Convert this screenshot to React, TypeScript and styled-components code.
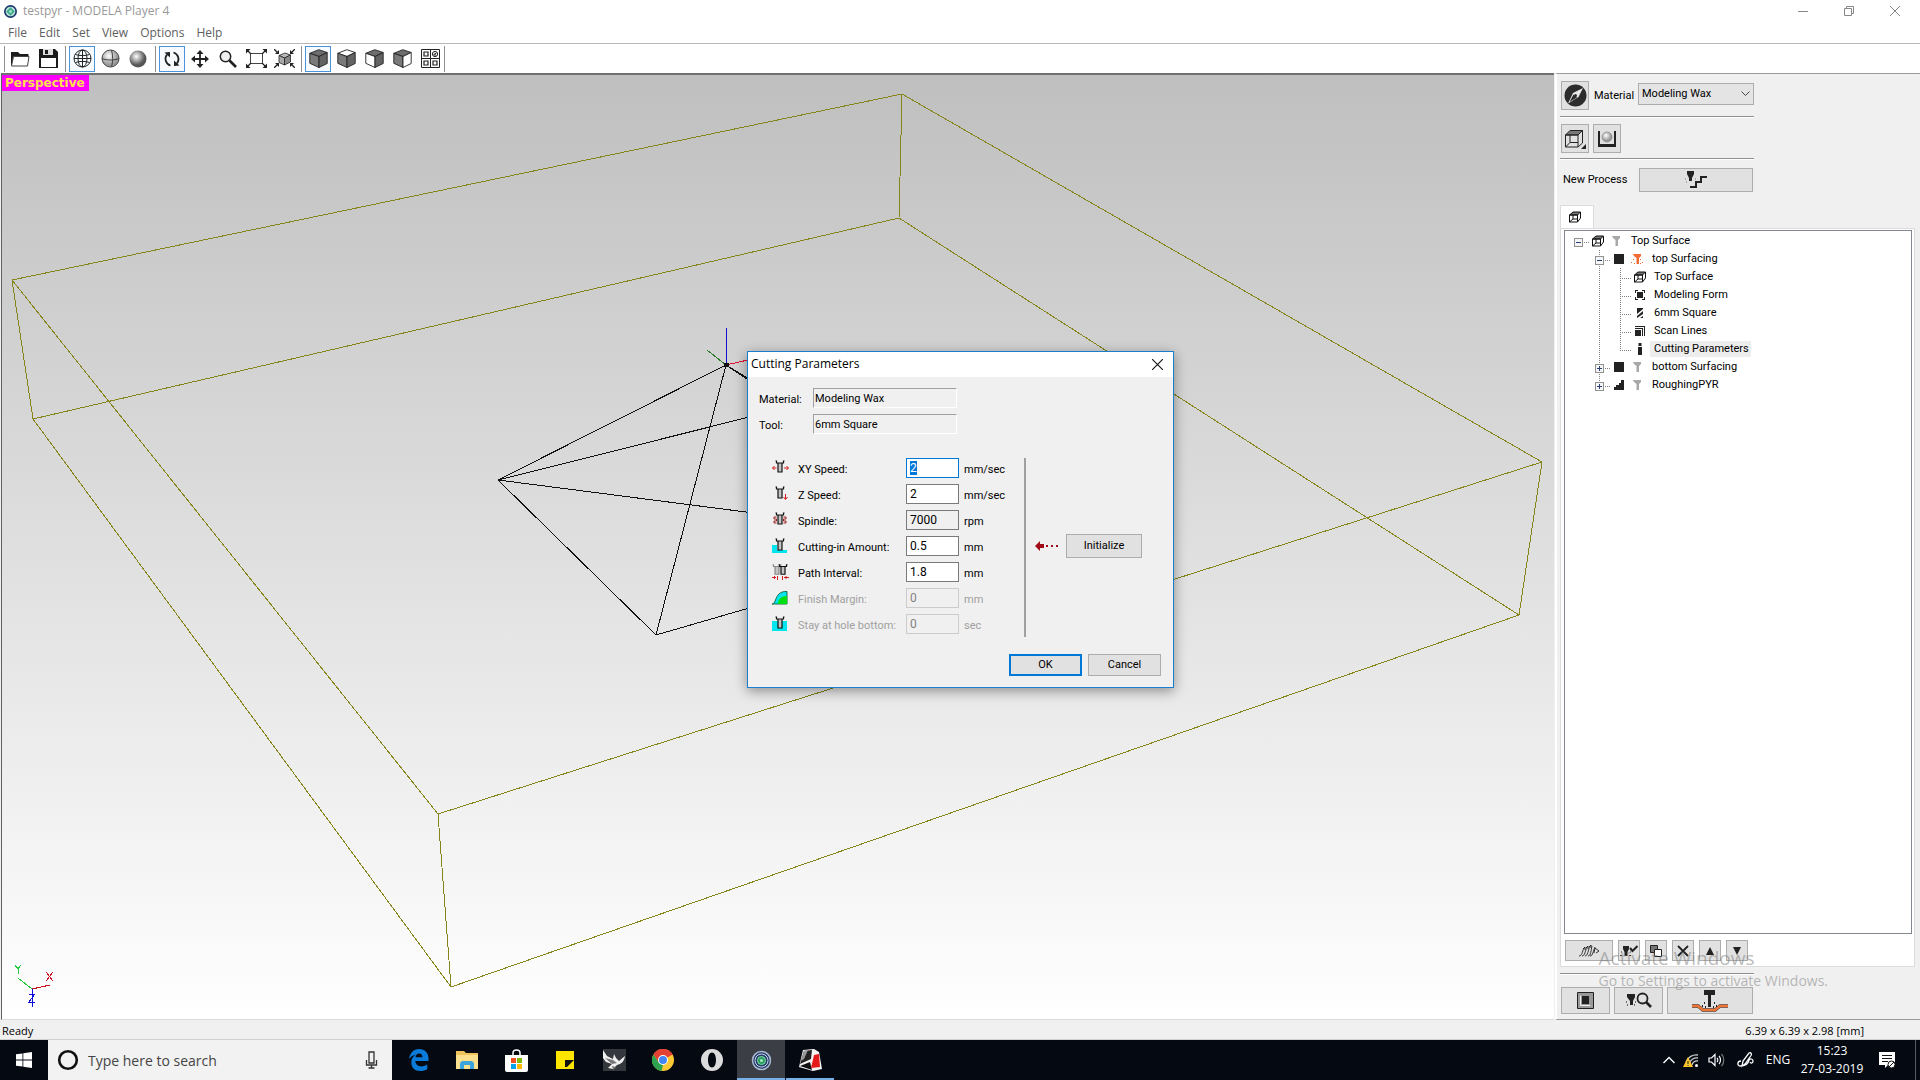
import React, { useEffect, useRef } from "react";
import styled, { createGlobalStyle, css } from "styled-components";

const ui = `"Open Sans", "Noto Sans", sans-serif`;
const classic = `Roboto, "Liberation Sans", sans-serif`;

const GlobalStyle = createGlobalStyle`
  *, *::before, *::after { box-sizing: border-box; }
  body { margin: 0; background: #f0f0f0; color: #000; overflow: hidden; }
  button, input, select { font: inherit; color: inherit; margin: 0; border-radius: 0; }
  button { padding: 0; border: 0; background: none; }
  svg { display: block; flex: none; }
  ul { list-style: none; margin: 0; padding: 0; }
`;

/* ---------- frame ---------- */

const Desktop = styled.div`
  position: relative;
  display: flex;
  flex-direction: column;
  height: 100vh;
  font: 12px/16px ${ui};
`;

const TitleBar = styled.header`
  display: flex;
  align-items: center;
  height: 22px;
  padding: 0 2px 0 4px;
  background: #fff;
  color: #999;
`;

const AppTitle = styled.h1`
  flex: 1;
  margin: 0;
  padding-left: 6px;
  font: 12px/16px ${ui};
`;

const WindowButton = styled.button`
  display: grid;
  place-items: center;
  width: 46px;
  height: 22px;
`;

const MenuBar = styled.nav`
  display: flex;
  height: 21px;
  padding-left: 2px;
  background: #fff;
  color: #606060;
`;

const MenuButton = styled.button`
  padding: 0 6px;
`;

const Toolbar = styled.div`
  display: flex;
  align-items: center;
  height: 30px;
  padding-left: 4px;
  background: #fff;
  border-top: 1px solid #b8b8b8;
`;

const ToolGroup = styled.div`
  display: flex;
  align-items: center;
  height: 26px;
  padding: 0 3px 0 1px;
  border-left: 1px solid #909090;

  & + & {
    padding-left: 2px;
  }

  &:last-child {
    padding-right: 0;
    border-right: 1px solid #909090;
  }
`;

const ToolButton = styled.button<{ $on?: boolean }>`
  display: grid;
  place-items: center;
  width: 26px;
  height: 26px;
  margin: 0 1px;
  border: 1px solid ${(p) => (p.$on ? "#4a94dc" : "transparent")};
  background: ${(p) => (p.$on ? "#f7fbff" : "none")};
`;

const Main = styled.main`
  display: flex;
  flex: 1;
  min-height: 0;
  padding-left: 1px;
`;

const Viewport = styled.section`
  position: relative;
  flex: 1;
  min-width: 0;
  border-top: 2px solid #707070;
  border-left: 1px solid #606060;
  border-bottom: 1px solid #dcdcdc;
  background: linear-gradient(#bfbfbf, #fff);
`;

const Scene = styled.svg`
  width: 100%;
  height: 100%;
`;

const ViewTag = styled.span`
  position: absolute;
  top: 0;
  left: 0;
  padding: 0 4px 0 3px;
  background: #f0f;
  color: #ffe24a;
  font: bold 12px/16px "DejaVu Sans", sans-serif;
`;

const StatusBar = styled.footer`
  display: flex;
  justify-content: space-between;
  align-items: center;
  height: 20px;
  padding: 3px 56px 0 2px;
  background: #f0f0f0;
  border-bottom: 1px solid #d0d0d0;
  font-size: 11px;
`;

/* ---------- side panel ---------- */

const SidePanel = styled.aside`
  display: flex;
  flex-direction: column;
  width: 365px;
  padding: 7px 5px 5px 3px;
  border-top: 1px solid #9a9a9a;
  border-left: 2px solid #fff;
  border-bottom: 1px solid #9a9a9a;
  margin-left: 1px;
  background: #f0f0f0;
  font: 11px/16px ${classic};
`;

const PanelRow = styled.div<{ $gap?: number }>`
  display: flex;
  align-items: center;
  gap: ${(p) => p.$gap ?? 4}px;
  width: 194px;
  padding-left: 1px;
`;

const PanelRule = styled.hr<{ $above?: number; $below?: number }>`
  width: 194px;
  margin: ${(p) => p.$above ?? 6}px 0 ${(p) => p.$below ?? 6}px;
  border: 0;
  border-top: 1px solid #909090;
  border-bottom: 1px solid #fff;
`;

const FlatButton = styled.button<{ $w: number; $h: number }>`
  display: grid;
  place-items: center;
  width: ${(p) => p.$w}px;
  height: ${(p) => p.$h}px;
  border: 1px solid #adadad;
  background: #e1e1e1;
`;

const SelectWrap = styled.span`
  position: relative;
  display: block;
  flex: 1;
  padding-bottom: 3px;

  svg {
    position: absolute;
    right: 4px;
    top: 8px;
    pointer-events: none;
  }
`;

const MaterialSelect = styled.select`
  display: block;
  width: 100%;
  height: 22px;
  padding: 0 3px;
  border: 1px solid #adadad;
  background: #e4e4e4;
  appearance: none;
`;

const SideLabel = styled.label`
  width: 39px;
`;

const ProcessRow = styled.div`
  display: flex;
  align-items: center;
  justify-content: space-between;
  width: 193px;
  padding: 2px 0 13px 3px;
`;

const Tab = styled.button`
  display: grid;
  place-items: center;
  width: 34px;
  height: 23px;
  padding-right: 4px;
  border: 1px solid #dcdcdc;
  border-bottom: 0;
  background: #fff;
`;

const TabPage = styled.div`
  display: flex;
  flex-direction: column;
  flex: 1;
  min-height: 0;
  padding: 1px 2px 5px 3px;
  border: 1px solid #dcdcdc;
  background: #fff;
`;

const TreeBox = styled.ul`
  flex: 1;
  padding: 1px 0 0 3px;
  border: 1px solid #828790;
  background: #fff;
`;

const TreeRow = styled.li`
  display: flex;
  align-items: center;
  height: 18px;
`;

const dotsY = "repeating-linear-gradient(#808080 0 1px, transparent 1px 2px)";
const dotsX = "repeating-linear-gradient(90deg, #808080 0 1px, transparent 1px 2px)";

type GuideKind = "none" | "stub" | "line" | "tee" | "elbow";

const guides: Record<GuideKind, ReturnType<typeof css>> = {
  none: css``,
  stub: css`background: ${dotsX} 10px 10px / 11px 1px no-repeat;`,
  line: css`background: ${dotsY} 10px 0 / 1px 18px no-repeat;`,
  tee: css`background: ${dotsY} 10px 0 / 1px 18px no-repeat, ${dotsX} 10px 10px / 11px 1px no-repeat;`,
  elbow: css`background: ${dotsY} 10px 0 / 1px 10px no-repeat, ${dotsX} 10px 10px / 11px 1px no-repeat;`,
};

const Guide = styled.span<{ $kind: GuideKind }>`
  display: grid;
  place-items: center;
  width: 21px;
  height: 18px;
  padding-top: 2px;
  ${(p) => guides[p.$kind]}
`;

const Expander = styled.button`
  display: grid;
  place-items: center;
  width: 9px;
  height: 9px;
  border: 1px solid #919191;
  background: #f6f6f6;
`;

const NodeParts = styled.span`
  display: flex;
  align-items: center;
  gap: 4px;
  padding-left: 3px;
`;

const ToolSlot = styled.span`
  display: grid;
  place-items: center;
  width: 15px;
`;

const NodeLabel = styled.span<{ $on?: boolean }>`
  padding: 0 2px 0 4px;
  background: ${(p) => (p.$on ? "#ededed" : "none")};
`;

const TreeTools = styled.div`
  display: flex;
  gap: 5px;
  padding: 6px 0 0 1px;
`;

/* ---------- dialog ---------- */

const Dialog = styled.form`
  position: absolute;
  left: calc(50% - 213px);
  top: calc(50% - 189px);
  width: 427px;
  border: 1px solid #1a7fcb;
  background: #f0f0f0;
  box-shadow: 0 3px 12px rgba(0, 0, 0, 0.4);
  font: 11px/16px ${classic};
`;

const DialogTitle = styled.div`
  display: flex;
  align-items: center;
  justify-content: space-between;
  height: 25px;
  padding: 0 10px 1px 3px;
  background: #fff;

  h2 {
    margin: 0;
    font: 12px/16px ${ui};
  }
`;

const DialogBody = styled.div`
  padding: 11px 12px 11px 11px;
`;

const InfoGrid = styled.div`
  display: grid;
  grid-template-columns: 54px 144px;
  gap: 6px 0;
  align-items: center;

  label { padding-top: 3px; }
`;

const InfoField = styled.input`
  height: 20px;
  padding: 1px 1px 0;
  border: 1px solid;
  border-color: #a0a0a0 #fff #fff #a0a0a0;
  background: #f0f0f0;
  outline: 0;
`;

const Columns = styled.div`
  display: flex;
  margin-top: 24px;
`;

const ParamGrid = styled.div`
  display: grid;
  grid-template-columns: 26px 108px 53px 59px;
  grid-auto-rows: 20px;
  row-gap: 6px;
  align-items: center;
  padding: 0 0 3px 13px;
`;

const ParamLabel = styled.label<{ $off?: boolean }>`
  padding-top: 3px;
  color: ${(p) => (p.$off ? "#a0a0a0" : "#000")};
`;

const Unit = styled.span<{ $off?: boolean }>`
  padding: 3px 0 0 5px;
  color: ${(p) => (p.$off ? "#a0a0a0" : "#000")};
`;

const ParamField = styled.input`
  width: 53px;
  height: 20px;
  padding: 0 3px;
  border: 1px solid #7a7a7a;
  background: #fff;
  font-size: 12px;
  outline: 0;

  &:read-only { background: #f0f0f0; }
  &:focus { border-color: #0078d7; }
  &:disabled { border-color: #cccccc; background: #f0f0f0; color: #808080; }
  &::selection { background: #0078d7; color: #fff; }
`;

const Divider = styled.div`
  width: 2px;
  margin: 0 9px 0 6px;
  background: #a0a0a0;
`;

const ResetArea = styled.div`
  display: flex;
  align-items: center;
  gap: 6px;
  padding-bottom: 3px;
`;

const DialogFooter = styled.div`
  display: flex;
  justify-content: flex-end;
  gap: 6px;
  margin-top: 17px;
`;

const DialogButton = styled.button<{ $primary?: boolean }>`
  width: ${(p) => (p.$primary === undefined ? 76 : 73)}px;
  height: ${(p) => (p.$primary === undefined ? 24 : 22)}px;
  border: ${(p) => (p.$primary ? "2px solid #0078d7" : "1px solid #adadad")};
  background: #e1e1e1;
`;

const Watermark = styled.div`
  position: absolute;
  right: 92px;
  bottom: 89px;
  color: rgba(120, 120, 120, 0.5);
  font: 14px/20px ${ui};
  pointer-events: none;

  strong {
    display: block;
    font: 19px/26px ${ui};
  }
`;

/* ---------- taskbar ---------- */

const Taskbar = styled.nav`
  display: flex;
  height: 40px;
  background: #040912;
  color: #fff;
`;

const TaskButton = styled.button<{ $state?: "active" | "open" }>`
  display: grid;
  place-items: center;
  width: 48px;
  height: 40px;
  background: ${(p) => (p.$state === "active" ? "#3b3f45" : "none")};
  box-shadow: ${(p) => (p.$state ? "inset 0 -2px #76b0e6" : "none")};
`;

const SearchBox = styled.label`
  display: flex;
  align-items: center;
  gap: 9px;
  width: 344px;
  padding: 0 14px 0 9px;
  background: #f2f2f2;
  color: #333;
`;

const SearchInput = styled.input`
  flex: 1;
  min-width: 0;
  padding: 2px 0 0;
  border: 0;
  background: none;
  font: 14px/20px ${ui};
  outline: 0;

  &::placeholder { color: #444; opacity: 1; }
`;

const PinnedApps = styled.div`
  display: flex;
  flex: 1;
  gap: 1px;
  padding-left: 2px;
`;

const Tray = styled.div`
  display: flex;
  align-items: center;
`;

const TrayButton = styled.button<{ $w: number }>`
  display: grid;
  place-items: center;
  width: ${(p) => p.$w}px;
  height: 40px;
`;

const Clock = styled.time`
  width: 74px;
  text-align: center;
  font: 12px/18px ${ui};
`;

const ShowDesktop = styled.button`
  width: 5px;
  height: 40px;
  margin-left: 10px;
  border-left: 1px solid #5a5e64;
`;

/* ---------- icons ---------- */

const ModelaLogo = ({ size = 13 }: { size?: number }) => (
  <svg width={size} height={size} viewBox="0 0 20 20">
    <circle cx="10" cy="10" r="8.700" fill="#bfe3dc" stroke="#1d3a70" strokeWidth="2.600" />
    <path d="M10 3.500l6.500 6.500-6.500 6.500L3.500 10z" fill="#39a887" />
    <path d="M10 7l3 3-3 3-3-3z" fill="#9fe0c4" />
  </svg>
);

const Cross = ({ s = 10, color = "#111" }: { s?: number; color?: string }) => (
  <svg width={s} height={s} viewBox="0 0 10 10" stroke={color} strokeWidth="1" fill="none">
    <path d="M0 0l10 10M10 0L0 10" />
  </svg>
);

const Folder = () => (
  <svg width="20" height="18" viewBox="0 0 20 18">
    <path d="M1 2h7l2 2h8.500v3H3.500L1.500 16H1z" fill="#1b1b1b" />
    <path d="M3.500 6.500h15.500L17.500 16h-16z" fill="#fff" stroke="#444" />
  </svg>
);
const Save = () => (
  <svg width="19" height="19" viewBox="0 0 19 19">
    <path d="M0 0h16l3 3v16H0z" fill="#1b1b1b" />
    <path d="M4 0h10v6H4z" fill="#ddd" />
    <path d="M6 1h3v4H6z" fill="#1b1b1b" />
    <path d="M2 9h15v9H2z" fill="#fff" />
  </svg>
);
const WireGlobe = () => (
  <svg width="19" height="19" viewBox="0 0 19 19" fill="none" stroke="#222">
    <circle cx="9.500" cy="9.500" r="8.500" />
    <path d="M1 9.500h17M9.500 1v17" />
    <ellipse cx="9.500" cy="9.500" rx="4.500" ry="8.500" />
    <path d="M2.500 5.500c4 1.500 10 1.500 14 0M2.500 13.500c4-1.500 10-1.500 14 0" />
  </svg>
);
const BallGradient = ({ id, edge }: { id: string; edge: string }) => (
  <radialGradient id={id} cx="40%" cy="35%">
    <stop offset="0" stopColor="#fff" />
    <stop offset="1" stopColor={edge} />
  </radialGradient>
);
const ShadedGlobe = () => (
  <svg width="19" height="19" viewBox="0 0 19 19" fill="none" stroke="#444">
    <BallGradient id="ballA" edge="#999" />
    <circle cx="9.500" cy="9.500" r="8.500" fill="url(#ballA)" />
    <path d="M1 9.500c5 2 12 2 17 0M10.500 1c1.500 5 1.500 12 0 17" />
  </svg>
);
const Ball = () => (
  <svg width="18" height="18" viewBox="0 0 18 18">
    <BallGradient id="ballB" edge="#555" />
    <circle cx="9" cy="9" r="8.500" fill="url(#ballB)" />
  </svg>
);
const Rotate = () => (
  <svg width="18" height="18" viewBox="0 0 18 18">
    <path d="M4 4.500a7 7 0 0 0 3.500 11M10.500 2.500a7 7 0 0 1 3.500 11" fill="none" stroke="#222" strokeWidth="1.800" />
    <path d="M1.500 2.500L7 2v5.500zM16.500 15.500L11 16v-5.500z" fill="#222" />
  </svg>
);
const Move = () => (
  <svg width="18" height="18" viewBox="0 0 18 18">
    <path d="M9 2v14M2 9h14" stroke="#222" strokeWidth="1.800" />
    <path d="M9 0l3.500 4h-7zM9 18l3.500-4h-7zM0 9l4-3.500v7zM18 9l-4-3.500v7z" fill="#222" />
  </svg>
);
const Magnifier = () => (
  <svg width="18" height="18" viewBox="0 0 18 18" fill="none" stroke="#222">
    <circle cx="6.500" cy="6.500" r="5.200" strokeWidth="1.500" fill="#eee" />
    <path d="M10.500 10.500l6.500 6.500" strokeWidth="2.600" />
  </svg>
);
const FitFrame = () => (
  <svg width="21" height="19" viewBox="0 0 21 19" fill="none">
    <path d="M4.500 4.500h12v10h-12z" stroke="#444" />
    <path d="M1 1l4 4M20 1l-4 4M1 18l4-4M20 18l-4-4" stroke="#222" strokeWidth="1.300" />
    <path d="M0 0h4.500L0 4.500zM21 0h-4.500L21 4.500zM0 19h4.500L0 14.500zM21 19h-4.500l4.500-4.500z" fill="#222" />
  </svg>
);
const Cube = ({ top = "#6d6d6d", left = "#7a7a7a", right = "#636363" }) => (
  <svg width="19" height="19" viewBox="0 0 19 19" stroke="#222" strokeWidth=".9" strokeLinejoin="round">
    <path d="M.8 4.300l9-3.600 8.400 2.800-8.200 4z" fill={top} />
    <path d="M.8 4.300L10 7.500v11L.8 14.300z" fill={left} />
    <path d="M18.200 3.500L10 7.500v11l8.200-4z" fill={right} />
  </svg>
);
const FitCube = () => (
  <svg width="21" height="19" viewBox="0 0 21 19" fill="none">
    <path d="M0 0l4 4M21 0l-4 4M0 19l4-4M21 19l-4-4" stroke="#222" strokeWidth="1.300" />
    <path d="M5 1v4H1zM16 1v4h4zM5 18v-4H1zM16 18v-4h4z" fill="#222" />
    <g stroke="#222" strokeWidth=".8">
      <path d="M5 6.500l6-2.500 5.500 2-6 3z" fill="#bbb" />
      <path d="M5 6.500L10.500 9v7L5 13.500z" fill="#aaa" />
      <path d="M16.500 6l-6 3v7l6-3z" fill="#888" />
    </g>
  </svg>
);
const FourViews = () => (
  <svg width="19" height="19" viewBox="0 0 19 19" fill="none" stroke="#222">
    <path d="M.5.5h18v18H.5zM9.500.5v18M.5 9.500h18" />
    <path d="M3 3h4v4H3zM3 12h4v4H3zM12 12h4v4h-4z" strokeWidth="1.200" />
    <circle cx="14" cy="5" r="2.600" />
    <path d="M12.500 5.500l3-1.500M14 5v2.500" />
  </svg>
);
const Compass = () => (
  <svg width="23" height="23" viewBox="0 0 23 23">
    <circle cx="11.500" cy="11.500" r="11" fill="#2c2c2c" />
    <path d="M19 4l-4.500 9L4 19.500 9 9z" fill="#e8e8e8" />
    <path d="M5.500 18l4-7.500 3.500 3z" fill="#2c2c2c" />
    <circle cx="11.500" cy="11.500" r="1.500" fill="#2c2c2c" />
  </svg>
);
const OpenBox = () => (
  <svg width="22" height="20" viewBox="0 0 22 20" fill="none" stroke="#222">
    <path d="M1.500 6L6 1.500h12.500L14 6z" fill="#777" />
    <path d="M1.500 6H14v12H1.500zM18.500 1.500V14L14 18M6 6v7.500L1.500 18M6 13.500h8" />
    <path d="M22 15v5h-5z" fill="#222" stroke="none" />
  </svg>
);
const Tank = () => (
  <svg width="18" height="18" viewBox="0 0 18 18">
    <path d="M0 1h2v13h14V1h2v16H0z" fill="#222" />
    <BallGradient id="tankBall" edge="#999" />
    <circle cx="9" cy="7" r="5" fill="url(#tankBall)" stroke="#777" strokeWidth=".6" />
  </svg>
);
const NewProcessIcon = () => (
  <svg width="24" height="18" viewBox="0 0 24 18">
    <path d="M3 0h7v3L8 7v3H5V7L3 3z" fill="#222" />
    <path d="M6 16h6v-5h5V6h6" fill="none" stroke="#222" strokeWidth="2" />
    <path d="M1 8h1M2 11h1M11 8h1" stroke="#777" />
  </svg>
);
const SmallBox = () => (
  <svg width="12" height="12" viewBox="0 0 12 12" fill="none" stroke="#111">
    <path d="M.5 4L4 1h7.500L8.500 4z" fill="#777" />
    <path d="M.5 4h8v7h-8zM11.500 1v6l-3 4M4 4v4L.5 11M4 8h4" />
  </svg>
);
const Bit = ({ hot }: { hot?: boolean }) => (
  <svg width="12" height="12" viewBox="0 0 12 12">
    <path d="M2 1h8v2L8 5v6H5.500V5L3 3z" fill={hot ? "#f26a36" : "#a8a8a8"} />
    {hot && <path d="M2 6h1v1H2zM0 9h1v1H0zM3 10h1v1H3zM9 6h1v1H9zM11 9h1v1h-1zM9 10h1v1H9z" fill="#f26a36" />}
  </svg>
);
const Shape = ({ d }: { d: string }) => (
  <svg width="12" height="12" viewBox="0 0 12 12"><path d={d} fill="#222" /></svg>
);
const shapes = {
  square: "M1 1h10v10H1z",
  form: "M1 1h3v1H2v2H1zM8 1h3v3h-1V2H8zM1 8h1v2h2v1H1zM10 8h1v3H8v-1h2zM3 3h6v6H3z",
  endmill: "M3 1h6v1L3 7zM9 4v3L3 11V9zM9 9v2H6z",
  scan: "M1 1h10v10h-1V2H1zM1 3h8v8H8V4H1zM1 5h6v6H1z",
  info: "M4.500 0h3v3h-3zM4 4h4v8H4z",
  stairs: "M8 1h3v10H1V8h2V6h3V4h2z",
};
const Blades = () => (
  <svg width="22" height="12" viewBox="0 0 22 12" fill="none" stroke="#222" strokeWidth=".9">
    <path d="M1 11c3 0 3-4 5-8M4 11c3 0 3-5 5-9M7 11c3 0 3-6 5-10M10 11c3 0 3-6 4-10M12 11c3 0 3-5 5-9" />
    <path d="M5 4l2-2v3M8 3l2-2v3M11 2l2-2v3M16 8l1-5 4 3-3 2" />
  </svg>
);
const BitCheck = () => (
  <svg width="18" height="12" viewBox="0 0 18 12">
    <path d="M3 1h6v3L7.500 7v4h-3V7L3 4z" fill="#222" />
    <path d="M1 7h1M0 10.500h2M10 7h1M9 10.500h2" stroke="#333" />
    <path d="M10 3l2.500 3L17.500 1" fill="none" stroke="#222" strokeWidth="2" />
  </svg>
);
const Copy = () => (
  <svg width="12" height="12" viewBox="0 0 12 12" stroke="#222">
    <path d="M.5.5h7v7h-7z" fill="#777" />
    <path d="M4.500 4.500h7v7h-7z" fill="#fff" />
  </svg>
);
const BoldX = () => (
  <svg width="12" height="12" viewBox="0 0 12 12" stroke="#222" strokeWidth="1.800"><path d="M1 1l10 10M11 1L1 11" /></svg>
);
const Stock = () => (
  <svg width="17" height="17" viewBox="0 0 17 17" stroke="#222">
    <path d="M.5.500h16v16H.5z" fill="#999" />
    <path d="M3.500 3.500v10h10" fill="none" stroke="#eee" />
    <path d="M5 4h7v8H5z" fill="#222" stroke="none" />
  </svg>
);
const Preview = () => (
  <svg width="26" height="18" viewBox="0 0 26 18" fill="none">
    <path d="M1 2h8v3L7 9v4H4V9L1 5z" fill="#222" />
    <path d="M0 10h1M1 13h1M9 10h1M8 13h1" stroke="#444" strokeWidth="1.500" />
    <circle cx="16.500" cy="6.500" r="5" stroke="#222" strokeWidth="1.800" />
    <path d="M20 10l5 5" stroke="#222" strokeWidth="2.600" />
  </svg>
);
const CutNow = () => (
  <svg width="36" height="22" viewBox="0 0 36 22" fill="none">
    <path d="M0 16h6l5 4h12l5-4h8" stroke="#333" strokeWidth="3.500" />
    <path d="M0 16h6l5 4h12l5-4h8" stroke="#ee7638" strokeWidth="2.500" />
    <path d="M12 0h11v5h-4v12h-3V5h-4z" fill="#222" />
    <path d="M12 13h1M10 16h1M13 17h1M22 13h1M24 16h1M21 17h1" stroke="#222" strokeWidth="2" />
  </svg>
);

const Holder = ({ x = 0, gray }: { x?: number; gray?: boolean }) => (
  <g transform={`translate(${x} 0)`} fill="none" stroke={gray ? "#888" : "#111"} strokeWidth="1.200">
    <path d="M6 3h4v9H6z" fill="#c4c4c4" stroke="none" />
    <path d="M3.500 1h1v2h7V1h1M6 3v9h4V3" />
  </g>
);
const ParamIcon = ({ kind }: { kind: string }) => (
  <svg width="17" height="16" viewBox="0 0 17 16" fill="none">
    {kind === "z" && <path d="M13.500 8v5M11.500 11l2 2.500 2-2.500" stroke="#d21f1f" />}
    {kind === "xy" && <path d="M4.500 8H.5M2.500 6L.5 8l2 2M12 8h4.500M14.500 6l2 2-2 2" stroke="#d21f1f" />}
    {kind === "spindle" && (
      <path d="M4.500 5H2v2h2.500v2H2v2h2.500M11.500 5H14v2h-2.500v2H14v2h-2.500" stroke="#9a2020" />
    )}
    {kind === "depth" && <path d="M0 7h5v5h10v3H0z" fill="#00e5ee" />}
    {kind === "hole" && <path d="M0 5h15v10H0z" fill="#00e5ee" />}
    {kind === "margin" && (
      <>
        <path d="M0 14c5 0 2-13 15-12.500V14z" fill="#00e5ee" stroke="#176b43" />
        <path d="M6 14c0-5 3-8 9-8v8z" fill="#00e010" />
      </>
    )}
    {kind === "interval" ? (
      <>
        <g transform="scale(1 .85)"><Holder x={-3} gray /><Holder x={3} /></g>
        <path d="M0 13.500h4M2.500 12v3M5.500 12v4M10.500 12v4M12 13.500h5M14 12v3" stroke="#d21f1f" />
      </>
    ) : (
      kind !== "margin" && <Holder />
    )}
  </svg>
);
const RedArrow = () => (
  <svg width="25" height="10" viewBox="0 0 25 10">
    <path d="M0 5l5-5v3h4v4H5v3z" fill="#a00c18" />
    <path d="M11 4h2v2h-2zM16 4h2v2h-2zM21 4h2v2h-2z" fill="#a00c18" />
  </svg>
);

const taskIcons: Record<string, React.ReactNode> = {
  Edge: (
    <svg width="21" height="22" viewBox="0 0 21 22">
      <path d="M1 10C2 4 5.500 0 11 0c6 0 9.500 4 9.500 9.500V12H7.300c.2 3.600 3 5.400 6 5.400 2.200 0 4.200-.6 6-1.800v4.600c-2 1.200-4.400 1.800-7 1.800-5.500 0-9-3.500-9-8.500 0-4 2.200-6.800 5.300-8C5 6.200 2.600 7.600 1 10zm6.500-1.800h7c0-2.300-1.200-3.800-3.400-3.800-2 0-3.300 1.600-3.600 3.800z" fill="#0a7bd8" />
    </svg>
  ),
  "File Explorer": (
    <svg width="22" height="18" viewBox="0 0 22 18">
      <path d="M0 0h8l2 2h12v16H0z" fill="#eec35c" />
      <path d="M0 4h22v14H0z" fill="#fbe08e" />
      <path d="M4 18v-6l2-2h10l2 2v6h-4v-4H8v4z" fill="#3ca6dc" />
    </svg>
  ),
  Store: (
    <svg width="23" height="23" viewBox="0 0 23 23">
      <path d="M8 7V4c0-4 7-4 7 0v3" fill="none" stroke="#fff" strokeWidth="1.500" />
      <path d="M0 6h23v15a2 2 0 0 1-2 2H2a2 2 0 0 1-2-2z" fill="#fff" />
      <path d="M6 9h5v5H6z" fill="#f04f23" /><path d="M12 9h5v5h-5z" fill="#7db901" />
      <path d="M6 15h5v5H6z" fill="#02a3ee" /><path d="M12 15h5v5h-5z" fill="#feb801" />
    </svg>
  ),
  "Sticky Notes": (
    <svg width="18" height="18" viewBox="0 0 18 18">
      <path d="M0 0h18v18H0z" fill="#ffe600" />
      <path d="M9 9h9l-7 7H9z" fill="#101010" />
    </svg>
  ),
  Rhino: (
    <svg width="23" height="22" viewBox="0 0 23 22">
      <path d="M0 0h23v22H0z" fill="#34373b" />
      <path d="M0 1l4 6 6 3 1-5 2 4 3 3 6-5c-1 6-4 8-8 9l-4 4-5-1 4-4-6-2-3-4z" fill="#f0f0f0" />
      <path d="M2 9l8 2 4 3-5 1zM9 17l4 1-3 3z" fill="#777" />
    </svg>
  ),
  Chrome: (
    <svg width="22" height="22" viewBox="0 0 22 22">
      <circle cx="11" cy="11" r="11" fill="#fcc934" />
      <path d="M11 11L1.500 5.500A11 11 0 0 1 20.500 5.500z" fill="#e34133" />
      <path d="M11 6h9.800A11 11 0 0 0 1.500 5.500L6.700 13.500z" fill="#e34133" />
      <path d="M1.500 5.500l5.200 8L11 16l-1.500 6A11 11 0 0 1 1.500 5.500z" fill="#2ea24f" />
      <circle cx="11" cy="11" r="5" fill="#fff" /><circle cx="11" cy="11" r="4" fill="#4285f4" />
    </svg>
  ),
  Opera: (
    <svg width="22" height="22" viewBox="0 0 22 22">
      <path fillRule="evenodd" d="M11 0a11 11 0 1 0 0 22 11 11 0 0 0 0-22zm0 3.500c2.600 0 4 3.500 4 7.500s-1.400 7.500-4 7.500S7 15 7 11s1.400-7.500 4-7.500z" fill="#dcdcdc" />
    </svg>
  ),
  "MODELA Player": (
    <svg width="21" height="21" viewBox="0 0 21 21" fill="none">
      <circle cx="10.500" cy="10.500" r="9" fill="#263c6c" stroke="#a9b8cf" strokeWidth="1.500" />
      <circle cx="10.500" cy="10.500" r="6.500" stroke="#c9d5e6" />
      <circle cx="10.500" cy="10.500" r="4" fill="#2a9a60" stroke="#7de0a0" />
      <circle cx="10.500" cy="10.500" r="1.500" fill="#a8f0c0" />
    </svg>
  ),
  VPanel: (
    <svg width="23" height="23" viewBox="0 0 23 23">
      <path d="M4 1l11-1 5 3 3 17-9 2L0 18z" fill="#f5f5f5" />
      <path d="M5 2l8-1-1 9-11 5z" fill="#222" /><path d="M1 17l10-4 2 8z" fill="#111" />
      <path d="M5 2l4-1-4 9-3 2z" fill="#999" />
      <path d="M15 6l5-1 1 13-9 1z" fill="#e51b1b" />
    </svg>
  ),
};

/* ---------- data ---------- */

const toolGroups: { name: string; icon: React.ReactNode; on?: boolean }[][] = [
  [{ name: "Open", icon: <Folder /> }, { name: "Save", icon: <Save /> }],
  [
    { name: "Wireframe", icon: <WireGlobe />, on: true },
    { name: "Shaded wireframe", icon: <ShadedGlobe /> },
    { name: "Rendering", icon: <Ball /> },
  ],
  [
    { name: "Rotate", icon: <Rotate />, on: true },
    { name: "Move", icon: <Move /> },
    { name: "Zoom", icon: <Magnifier /> },
    { name: "Fit to window", icon: <FitFrame /> },
    { name: "Fit model", icon: <FitCube /> },
  ],
  [
    { name: "Perspective view", icon: <Cube />, on: true },
    { name: "Top view", icon: <Cube top="#fff" /> },
    { name: "Front view", icon: <Cube left="#fff" /> },
    { name: "Side view", icon: <Cube right="#fff" /> },
    { name: "Four views", icon: <FourViews /> },
  ],
];

type Node = {
  label: string;
  cells: GuideKind[];
  toggle?: "+" | "-";
  icon: React.ReactNode;
  bit?: "gray" | "hot";
  on?: boolean;
};

const tree: Node[] = [
  { label: "Top Surface", cells: ["stub"], toggle: "-", icon: <SmallBox />, bit: "gray" },
  { label: "top Surfacing", cells: ["none", "tee"], toggle: "-", icon: <Shape d={shapes.square} />, bit: "hot" },
  { label: "Top Surface", cells: ["none", "line", "tee"], icon: <SmallBox /> },
  { label: "Modeling Form", cells: ["none", "line", "tee"], icon: <Shape d={shapes.form} /> },
  { label: "6mm Square", cells: ["none", "line", "tee"], icon: <Shape d={shapes.endmill} /> },
  { label: "Scan Lines", cells: ["none", "line", "tee"], icon: <Shape d={shapes.scan} /> },
  { label: "Cutting Parameters", cells: ["none", "line", "elbow"], icon: <Shape d={shapes.info} />, on: true },
  { label: "bottom Surfacing", cells: ["none", "tee"], toggle: "+", icon: <Shape d={shapes.square} />, bit: "gray" },
  { label: "RoughingPYR", cells: ["none", "elbow"], toggle: "+", icon: <Shape d={shapes.stairs} />, bit: "gray" },
];

const params = [
  { id: "xy", label: "XY Speed:", value: "2", unit: "mm/sec" },
  { id: "z", label: "Z Speed:", value: "2", unit: "mm/sec" },
  { id: "spindle", label: "Spindle:", value: "7000", unit: "rpm", locked: true },
  { id: "depth", label: "Cutting-in Amount:", value: "0.5", unit: "mm" },
  { id: "interval", label: "Path Interval:", value: "1.8", unit: "mm" },
  { id: "margin", label: "Finish Margin:", value: "0", unit: "mm", off: true },
  { id: "hole", label: "Stay at hole bottom:", value: "0", unit: "sec", off: true },
];

/* ---------- sections ---------- */

const Model = () => (
  <Scene viewBox="1 75 1552 944" preserveAspectRatio="xMidYMid meet" fill="none" shapeRendering="crispEdges">
    <g stroke="#85851a">
      <path d="M11 280L901 94L1541 462L437 814Z" />
      <path d="M32 419L898 218L1518 615L450 987Z" />
      <path d="M11 280L32 419M901 94L898 218M1541 462L1518 615M437 814L450 987" />
    </g>
    <g stroke="#111">
      <path d="M725 365L497 480L655 635ZM497 480L900 379M497 480L900 532M655 635L900 564M725 365L900 482M725 365L900 472" />
    </g>
    <path d="M725.500 328V365" stroke="#1010d0" />
    <path d="M706 350L725 365" stroke="#2a7a2a" />
    <path d="M725 365L760 357" stroke="#e01030" />
    <circle cx="725.500" cy="365" r="2.500" fill="#111" />
    <path d="M31 989L17 978" stroke="#1fc83c" />
    <path d="M31 989L49 985" stroke="#c81020" />
    <path d="M31.500 989V1007" stroke="#1010d8" />
    <path d="M14 965l3 4 3-4M17 969v5" stroke="#1fc83c" />
    <path d="M45 972l7 9M52 972l-7 9" stroke="#c81020" />
    <path d="M28 994h6l-6 8h6" stroke="#1010d8" />
  </Scene>
);

const ProcessPanel = () => (
  <SidePanel>
    <PanelRow $gap={5}>
      <FlatButton $w={28} $h={29} aria-label="Model setup"><Compass /></FlatButton>
      <SideLabel htmlFor="material">Material</SideLabel>
      <SelectWrap>
        <MaterialSelect id="material"><option>Modeling Wax</option></MaterialSelect>
        <svg width="9" height="6" viewBox="0 0 9 6" fill="none" stroke="#444"><path d="M.5.500l4 4 4-4" /></svg>
      </SelectWrap>
    </PanelRow>
    <PanelRule />
    <PanelRow>
      <FlatButton $w={28} $h={29} aria-label="Modeling form"><OpenBox /></FlatButton>
      <FlatButton $w={28} $h={29} aria-label="Tank"><Tank /></FlatButton>
    </PanelRow>
    <PanelRule $above={5} />
    <ProcessRow>
      <span>New Process</span>
      <FlatButton $w={114} $h={24} aria-label="New Process"><NewProcessIcon /></FlatButton>
    </ProcessRow>
    <Tab aria-label="Top surface"><SmallBox /></Tab>
    <TabPage>
      <TreeBox>
        {tree.map((n, i) => (
          <TreeRow key={i}>
            {n.cells.map((kind, c) => (
              <Guide key={c} $kind={kind}>
                {n.toggle && c === n.cells.length - 1 && (
                  <Expander aria-label={n.toggle === "-" ? "Collapse" : "Expand"}>
                    <svg width="5" height="5" viewBox="0 0 5 5" stroke="#2c3e78">
                      <path d={n.toggle === "-" ? "M0 2.500h5" : "M0 2.500h5M2.500 0v5"} />
                    </svg>
                  </Expander>
                )}
              </Guide>
            ))}
            <NodeParts>
              {n.icon}
              {n.bit && <ToolSlot><Bit hot={n.bit === "hot"} /></ToolSlot>}
              <NodeLabel $on={n.on}>{n.label}</NodeLabel>
            </NodeParts>
          </TreeRow>
        ))}
      </TreeBox>
      <TreeTools>
        <FlatButton $w={48} $h={21} aria-label="Create tool path"><Blades /></FlatButton>
        <FlatButton $w={22} $h={21} aria-label="Enable process"><BitCheck /></FlatButton>
        <FlatButton $w={22} $h={21} aria-label="Copy process"><Copy /></FlatButton>
        <FlatButton $w={22} $h={21} aria-label="Delete process"><BoldX /></FlatButton>
        <FlatButton $w={22} $h={21} aria-label="Move up"><Shape d="M6 2l4 8H2z" /></FlatButton>
        <FlatButton $w={22} $h={21} aria-label="Move down"><Shape d="M6 10l4-8H2z" /></FlatButton>
      </TreeTools>
    </TabPage>
    <PanelRule $below={12} />
    <PanelRow>
      <FlatButton $w={49} $h={27} aria-label="Cutting position"><Stock /></FlatButton>
      <FlatButton $w={49} $h={27} aria-label="Preview cutting"><Preview /></FlatButton>
      <FlatButton $w={86} $h={27} aria-label="Cut"><CutNow /></FlatButton>
    </PanelRow>
  </SidePanel>
);

const CuttingDialog = () => {
  const first = useRef<HTMLInputElement>(null);
  useEffect(() => {
    first.current?.focus();
    first.current?.select();
  }, []);
  return (
    <Dialog role="dialog" aria-labelledby="dialog-title" onSubmit={(e) => e.preventDefault()}>
      <DialogTitle>
        <h2 id="dialog-title">Cutting Parameters</h2>
        <button type="button" aria-label="Close"><Cross s={11} /></button>
      </DialogTitle>
      <DialogBody>
        <InfoGrid>
          <label htmlFor="info-material">Material:</label>
          <InfoField id="info-material" readOnly defaultValue="Modeling Wax" />
          <label htmlFor="info-tool">Tool:</label>
          <InfoField id="info-tool" readOnly defaultValue="6mm Square" />
        </InfoGrid>
        <Columns>
          <ParamGrid>
            {params.map((p, i) => (
              <React.Fragment key={p.id}>
                <ParamIcon kind={p.id} />
                <ParamLabel htmlFor={p.id} $off={p.off}>{p.label}</ParamLabel>
                <ParamField id={p.id} ref={i === 0 ? first : undefined} defaultValue={p.value} readOnly={p.locked} disabled={p.off} />
                <Unit $off={p.off}>{p.unit}</Unit>
              </React.Fragment>
            ))}
          </ParamGrid>
          <Divider />
          <ResetArea>
            <RedArrow />
            <DialogButton type="button">Initialize</DialogButton>
          </ResetArea>
        </Columns>
        <DialogFooter>
          <DialogButton $primary>OK</DialogButton>
          <DialogButton type="button" $primary={false}>Cancel</DialogButton>
        </DialogFooter>
      </DialogBody>
    </Dialog>
  );
};

const WindowsTaskbar = () => (
  <Taskbar>
    <TaskButton aria-label="Start">
      <svg width="16" height="16" viewBox="0 0 16 16" fill="#fff">
        <path d="M0 2.300L6.500 1.400v6.200H0zM7.300 1.300L16 0v7.600H7.300zM0 8.400h6.500v6.200L0 13.700zM7.300 8.400H16V16l-8.700-1.300z" />
      </svg>
    </TaskButton>
    <SearchBox>
      <svg width="22" height="22" viewBox="0 0 22 22"><circle cx="11" cy="11" r="8.800" fill="none" stroke="#111" strokeWidth="2.600" /></svg>
      <SearchInput placeholder="Type here to search" aria-label="Search" />
      <svg width="13" height="18" viewBox="0 0 13 18" fill="none" stroke="#333" strokeWidth="1.300">
        <path d="M4 1h5v11H4zM1.500 9v5h10V9M6.500 14v3M3.500 17h6" />
      </svg>
    </SearchBox>
    <PinnedApps>
      {Object.entries(taskIcons).map(([name, icon]) => (
        <TaskButton key={name} aria-label={name} $state={name === "MODELA Player" ? "active" : name === "VPanel" ? "open" : undefined}>
          {icon}
        </TaskButton>
      ))}
    </PinnedApps>
    <Tray>
      <TrayButton $w={20} aria-label="Show hidden icons">
        <svg width="12" height="8" viewBox="0 0 12 8" fill="none" stroke="#fff" strokeWidth="1.400"><path d="M.5 7L6 1.500 11.500 7" /></svg>
      </TrayButton>
      <TrayButton $w={24} aria-label="Network">
        <svg width="16" height="16" viewBox="0 0 16 16" fill="none">
          <path d="M3 10A11 11 0 0 1 15 3M6 12a8 8 0 0 1 9-6M9 13a5 5 0 0 1 6-4" stroke="#ccc" strokeWidth="1.300" />
          <circle cx="13.500" cy="13.500" r="1.500" fill="#fff" />
          <path d="M5 5l5 10H0z" fill="#fbc62c" /><path d="M5 9v3M5 13v1" stroke="#222" />
        </svg>
      </TrayButton>
      <TrayButton $w={26} aria-label="Volume">
        <svg width="17" height="14" viewBox="0 0 17 14" fill="none" stroke="#fff" strokeWidth="1.200">
          <path d="M1 5h2.500L7 1.500v11L3.500 9H1zM9 5c1 1 1 3 0 4M11 3c2 2 2 6 0 8" />
          <path d="M13.500 1c3 3 3 9 0 12" stroke="#777" />
        </svg>
      </TrayButton>
      <TrayButton $w={32} aria-label="Ink workspace">
        <svg width="17" height="16" viewBox="0 0 17 16" fill="none" stroke="#fff" strokeWidth="1.300">
          <path d="M5 14L6 9l6-8c2-1 3 1 2 2.500L8 12zM4 9c-4 0-4 5-1 5 5 0 8-1 9-6 1-2 4-1 4 1s-2 3-3 1" />
        </svg>
      </TrayButton>
      <TrayButton $w={34} aria-label="Input language">ENG</TrayButton>
      <Clock>15:23<br />27-03-2019</Clock>
      <TrayButton $w={36} aria-label="Notifications">
        <svg width="17" height="17" viewBox="0 0 17 17">
          <path d="M0 0h16v13h-7l-3 3v-3H0z" fill="#fff" />
          <path d="M3 3.500h10M3 6.500h10M3 9.500h6" stroke="#111" />
          <circle cx="12.500" cy="12.500" r="3.500" fill="#fff" stroke="#111" />
          <path d="M10 15l5-5" stroke="#111" />
        </svg>
      </TrayButton>
      <ShowDesktop aria-label="Show desktop" />
    </Tray>
  </Taskbar>
);

export default function App() {
  return (
    <Desktop>
      <GlobalStyle />
      <TitleBar>
        <ModelaLogo />
        <AppTitle>testpyr - MODELA Player 4</AppTitle>
        <WindowButton aria-label="Minimize">
          <svg width="10" height="1" viewBox="0 0 10 1"><path d="M0 .5h10" stroke="#888" /></svg>
        </WindowButton>
        <WindowButton aria-label="Restore">
          <svg width="10" height="10" viewBox="0 0 10 10" fill="none" stroke="#888"><path d="M.5 2.500h7v7h-7zM2.500 2.500v-2h7v7h-2" /></svg>
        </WindowButton>
        <WindowButton aria-label="Close"><Cross color="#888" /></WindowButton>
      </TitleBar>
      <MenuBar>
        {["File", "Edit", "Set", "View", "Options", "Help"].map((m) => <MenuButton key={m}>{m}</MenuButton>)}
      </MenuBar>
      <Toolbar>
        {toolGroups.map((group, i) => (
          <ToolGroup key={i}>
            {group.map((t) => <ToolButton key={t.name} aria-label={t.name} $on={t.on}>{t.icon}</ToolButton>)}
          </ToolGroup>
        ))}
      </Toolbar>
      <Main>
        <Viewport>
          <Model />
          <ViewTag>Perspective</ViewTag>
        </Viewport>
        <ProcessPanel />
      </Main>
      <StatusBar>
        <span>Ready</span>
        <span>6.39 x 6.39 x 2.98 [mm]</span>
      </StatusBar>
      <WindowsTaskbar />
      <CuttingDialog />
      <Watermark><strong>Activate Windows</strong>Go to Settings to activate Windows.</Watermark>
    </Desktop>
  );
}
